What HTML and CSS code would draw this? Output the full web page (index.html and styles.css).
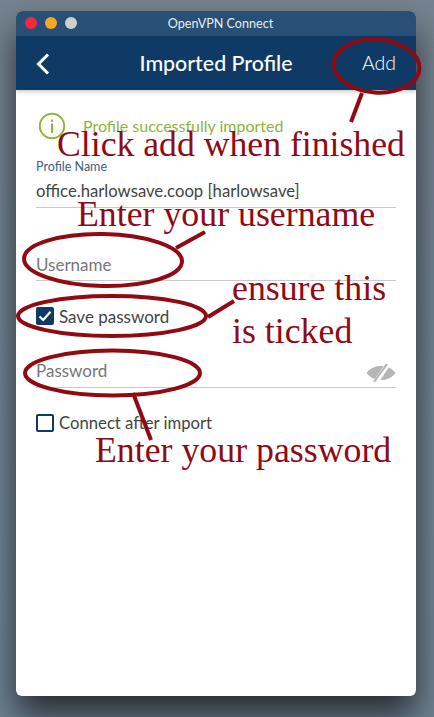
FILE: index.html
```html
<!DOCTYPE html>
<html lang="en">

<head>
    <meta charset="UTF-8">
    <meta name="viewport" content="width=device-width, initial-scale=1.0">
    <title>OpenVPN Connect</title>
    <link rel="stylesheet" href="styles.css">
</head>

<body>
    <div class="window">
        <div class="titlebar">
            <div class="lights">
                <span class="light red"></span>
                <span class="light orange"></span>
                <span class="light grey"></span>
            </div>
            <span class="window-title">OpenVPN Connect</span>
        </div>

        <div class="header">
            <svg class="back" width="14" height="22" viewBox="0 0 14 22">
                <path d="M12 1.5 L2.5 11 L12 20.5" fill="none" stroke="#fff" stroke-width="3" />
            </svg>
            <h1>Imported Profile</h1>
            <span class="add">Add</span>
        </div>

        <div class="content">
            <div class="notice">
                <svg width="28" height="28" viewBox="0 0 28 28">
                    <circle cx="14" cy="14" r="12.2" fill="none" stroke="#8fb43a" stroke-width="2" />
                    <rect x="13" y="7.5" width="2" height="2.2" fill="#8fb43a" />
                    <rect x="13" y="11.5" width="2" height="9.5" fill="#8fb43a" />
                </svg>
                <span>Profile successfully imported</span>
            </div>

            <div class="field profile-field">
                <label>Profile Name</label>
                <div class="value">office.harlowsave.coop [harlowsave]</div>
            </div>

            <div class="field username-field">
                <div class="placeholder">Username</div>
            </div>

            <div class="check save-check">
                <span class="box checked">
                    <svg width="14" height="12" viewBox="0 0 14 12">
                        <path d="M1.5 6.5 L5.2 10 L12.5 1.8" fill="none" stroke="#fff" stroke-width="2.2" />
                    </svg>
                </span>
                <span>Save password</span>
            </div>

            <div class="field password-field">
                <div class="placeholder">Password</div>
                <svg width="30" height="18" viewBox="0 0 30 18">
                    <path d="M0.5 9 C5 3.5 10 2 15 2 C20 2 25 3.5 29.5 9 C25 14.5 20 16 15 16 C10 16 5 14.5 0.5 9 Z" fill="#b5b5b5" />
                    <path d="M10 18 L22 0" stroke="#fff" stroke-width="5" />
                    <path d="M8 18 L21 0" stroke="#b5b5b5" stroke-width="2" />
                </svg>
            </div>

            <div class="check connect-check">
                <span class="box"></span>
                <span>Connect after import</span>
            </div>
        </div>
    </div>

    <!-- hand drawn notes on top of the screenshot -->
    <svg class="marks" width="434" height="717" viewBox="0 0 434 717">
        <g fill="none" stroke="#900a14" stroke-width="4">
            <ellipse cx="376.5" cy="66" rx="43" ry="26.5" transform="rotate(4 376.5 66)" />
            <path d="M362 93 L351 122" />
            <ellipse cx="103" cy="260" rx="79" ry="26" transform="rotate(1 103 260)" />
            <path d="M176 248 L205 232" />
            <ellipse cx="112" cy="316" rx="94" ry="20" />
            <path d="M208 317 L234 301" />
            <ellipse cx="112.5" cy="373" rx="87.5" ry="22.5" />
            <path d="M133 393 L151 440" />
        </g>
    </svg>
    <div class="note note-add">Click add when finished</div>
    <div class="note note-user">Enter your username</div>
    <div class="note note-ensure">ensure this<br>is ticked</div>
    <div class="note note-pass">Enter your password</div>
</body>

</html>
```

FILE: styles.css
```css
html,
body {
    height: 100%;
}

body {
    margin: 0;
    padding: 11px 0 0 16px;
    box-sizing: border-box;
    overflow: hidden;
    position: relative;
    background: linear-gradient(180deg, #74838f 0%, #728596 70%, #6f8293 100%);
    font-family: Lato, "Open Sans", sans-serif;
}

.window {
    width: 400px;
    height: 685px;
    border-radius: 6px;
    overflow: hidden;
    background: white;
    box-shadow: 0 20px 34px rgba(0, 0, 0, 0.65);
    display: flex;
    flex-direction: column;
}

.titlebar {
    height: 25px;
    flex: none;
    background: #284f75;
    display: flex;
    align-items: center;
    justify-content: center;
    position: relative;
}

.lights {
    position: absolute;
    left: 9px;
    top: 6px;
    display: flex;
    gap: 8px;
}

.light {
    width: 12px;
    height: 12px;
    border-radius: 50%;
}

.red {
    background: #f6283c;
}

.orange {
    background: #f6a823;
}

.grey {
    background: #cfcfcf;
}

.window-title {
    color: #e6ecf2;
    font-size: 12.6px;
    padding-left: 9px;
}

.header {
    height: 54px;
    flex: none;
    background: #0f3a65;
    color: white;
    display: flex;
    align-items: center;
    justify-content: center;
    position: relative;
    box-shadow: 0 2px 4px rgba(0, 0, 0, 0.2);
}

.header h1 {
    margin: 0;
    font-size: 21.4px;
    font-weight: 500;
}

.back {
    position: absolute;
    left: 20px;
    top: 17px;
}

.add {
    position: absolute;
    right: 20px;
    top: 15px;
    font-size: 19.5px;
    font-weight: 300;
}

.content {
    padding: 0 20px;
    color: #444;
    font-size: 16.7px;
}

.notice {
    display: flex;
    align-items: center;
    gap: 17px;
    height: 28px;
    margin-top: 22px;
    margin-left: 2px;
    color: #8fb43a;
    font-size: 16px;
}

.notice span {
    padding-bottom: 2px;
}

.field {
    border-bottom: 1px solid #c9c9c9;
    box-sizing: border-box;
}

.profile-field {
    margin-top: 19px;
    height: 49px;
}

.profile-field label {
    display: block;
    color: #3b6088;
    font-size: 12.5px;
    line-height: 16px;
}

.value {
    margin-top: 6px;
    line-height: 20px;
}

.username-field {
    margin-top: 44px;
    padding-top: 3px;
    height: 29px;
}

.placeholder {
    color: #777;
    font-size: 17px;
    line-height: 20px;
}

.check {
    display: flex;
    align-items: center;
    gap: 5px;
    height: 18px;
}

.save-check {
    margin-top: 26px;
    font-size: 17px;
}

.box {
    width: 18px;
    height: 18px;
    box-sizing: border-box;
    border: 2px solid #0f3a65;
    border-radius: 2px;
    display: flex;
    align-items: center;
    justify-content: center;
}

.box.checked {
    background: #0f3a65;
}

.password-field {
    margin-top: 36px;
    height: 27px;
    display: flex;
    justify-content: space-between;
    align-items: flex-start;
}

.password-field svg {
    margin-top: 3px;
}

.connect-check {
    margin-top: 26px;
}

.marks {
    position: absolute;
    left: 0;
    top: 0;
}

.note {
    position: absolute;
    color: #900a14;
    font-family: "Liberation Serif", serif;
    font-size: 35.8px;
    line-height: 43px;
    white-space: nowrap;
}

.note-add {
    left: 57px;
    top: 123px;
    font-size: 35.7px;
}

.note-user {
    left: 77px;
    top: 193px;
}

.note-ensure {
    left: 232px;
    top: 267px;
}

.note-pass {
    left: 95px;
    top: 429px;
}
```
